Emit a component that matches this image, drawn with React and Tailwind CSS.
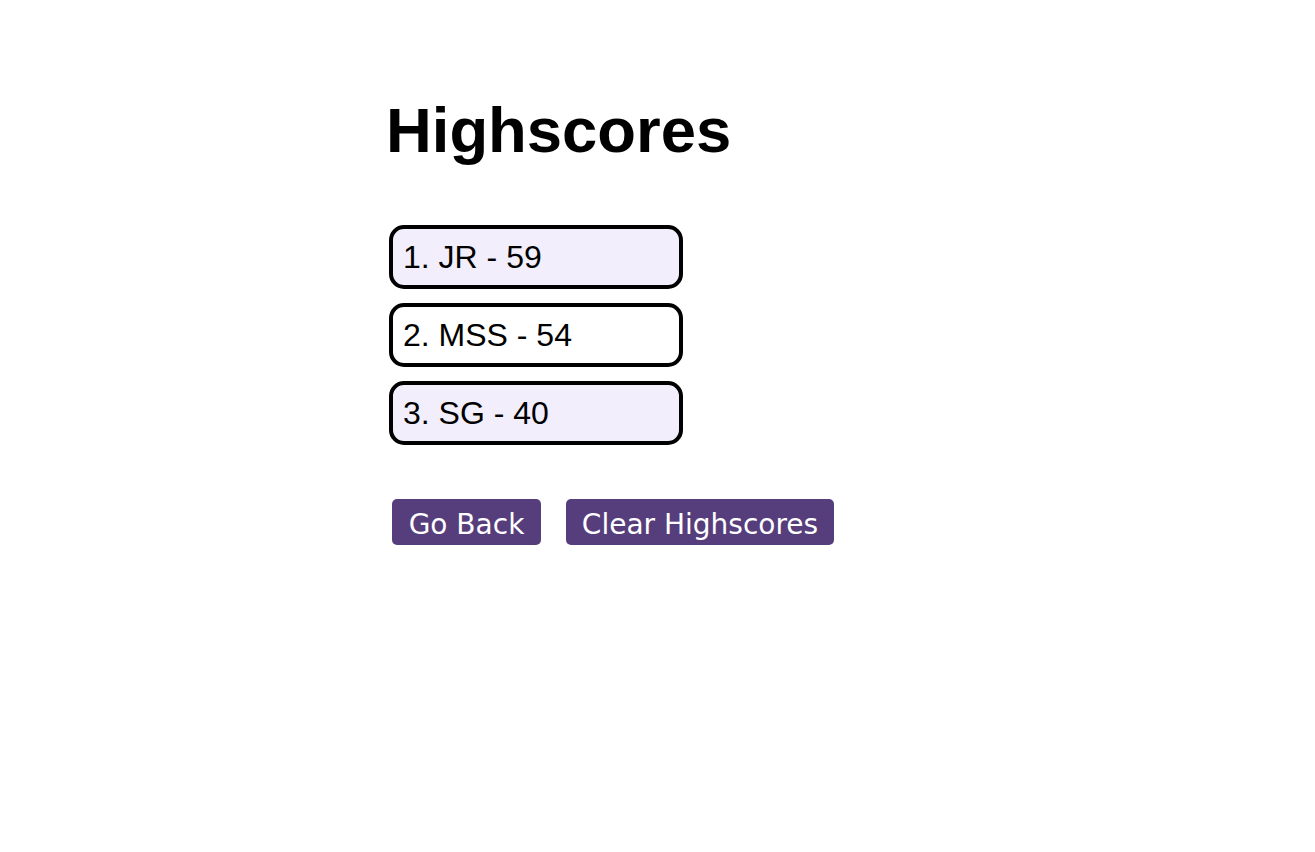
import React from "react";

const scores = [
  { name: "JR", score: 59 },
  { name: "MSS", score: 54 },
  { name: "SG", score: 40 },
];

const App = () => {
  return (
    <section className="min-h-[852px] bg-white pl-[386px] pt-[93px] text-black">
      <h1 className="font-['Liberation_Sans',Arial,sans-serif] text-[63.4px] font-bold leading-[74px]">
        Highscores
      </h1>

      <ol className="mt-[58px] ml-[3px] flex w-[294px] flex-col gap-[14px]">
        {scores.map((s, i) => (
          <li
            key={s.name}
            className={`flex h-[64px] items-center rounded-[15px] border-4 border-black pb-[1px] pl-[10px] font-['Liberation_Sans',Arial,sans-serif] text-[32px] ${
              i % 2 === 0 ? "bg-[#f2eefb]" : "bg-white"
            }`}
          >
            {i + 1}. {s.name} - {s.score}
          </li>
        ))}
      </ol>

      <div className="mt-[54px] ml-[6px] flex gap-[25px]">
        <button className="flex h-[46px] w-[149px] items-center justify-center rounded-[5px] bg-[#563d7c] pt-[6px] font-['DejaVu_Sans',Verdana,sans-serif] text-[28px] text-white">
          Go Back
        </button>
        <button className="flex h-[46px] w-[268px] items-center justify-center rounded-[5px] bg-[#563d7c] pt-[6px] font-['DejaVu_Sans',Verdana,sans-serif] text-[28px] text-white">
          Clear Highscores
        </button>
      </div>
    </section>
  );
};

export default App;
